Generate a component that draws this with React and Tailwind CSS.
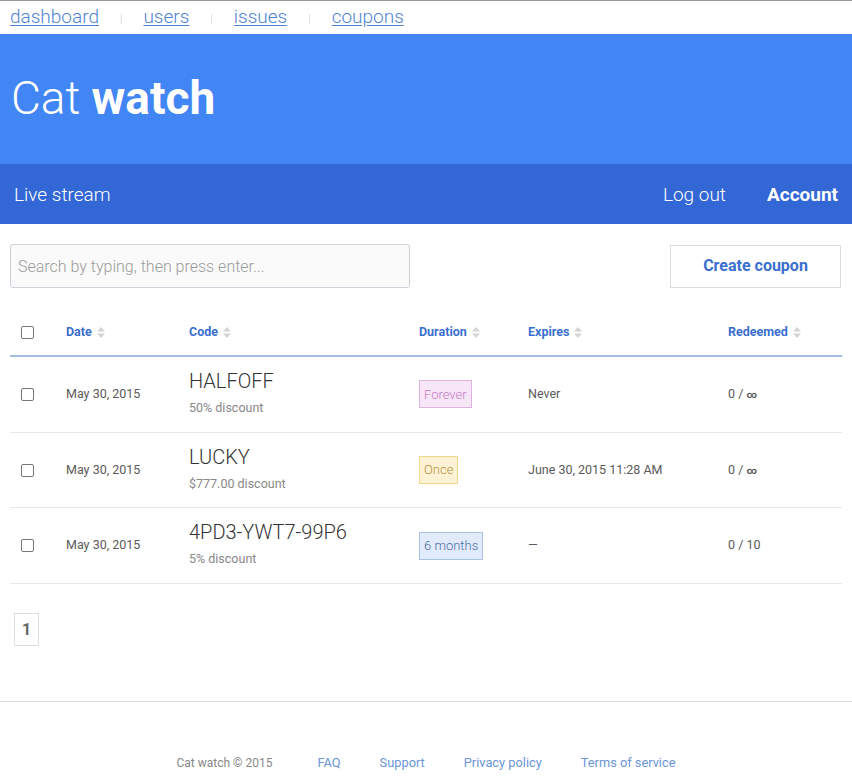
import { useState } from 'react'

const coupons = [
  {
    id: 1,
    date: 'May 30, 2015',
    code: 'HALFOFF',
    discount: '50% discount',
    duration: 'Forever',
    badge: 'bg-[#f7e6f7] border-[#dfb3df] text-[#c67ac6]',
    expires: 'Never',
    used: '0',
    limit: '∞',
  },
  {
    id: 2,
    date: 'May 30, 2015',
    code: 'LUCKY',
    discount: '$777.00 discount',
    duration: 'Once',
    badge: 'bg-[#fdf3d4] border-[#f1d98c] text-[#b5903e]',
    expires: 'June 30, 2015 11:28 AM',
    used: '0',
    limit: '∞',
  },
  {
    id: 3,
    date: 'May 30, 2015',
    code: '4PD3-YWT7-99P6',
    discount: '5% discount',
    duration: '6 months',
    badge: 'bg-[#e1ebfb] border-[#a9c1e7] text-[#4c6ea6]',
    expires: '—',
    used: '0',
    limit: '10',
  },
]

const cols = 'grid grid-cols-[56px_123px_230px_109px_200px_1fr] items-center'

function SortIcon() {
  return (
    <svg width="8" height="11" viewBox="0 0 8 11" className="ml-[5px] inline-block">
      <path d="M4 0L8 4.5H0Z" fill="#d4d4d4" />
      <path d="M4 11L8 6.5H0Z" fill="#d4d4d4" />
    </svg>
  )
}

function Checkbox() {
  const [checked, setChecked] = useState(false)
  return (
    <input
      type="checkbox"
      checked={checked}
      onChange={(e) => setChecked(e.target.checked)}
      className="block ml-[11px] w-[13px] h-[13px] appearance-none border border-[#777] rounded-[2px] bg-white"
    />
  )
}

export default function App() {
  return (
    <div className="min-h-[781px] bg-white border-t border-[#999] font-['Roboto',sans-serif] text-[#444]">
      {/* Top links */}
      <div className="h-[33px] flex items-center px-[10px] text-[19px] font-light">
        <a href="#" className="text-[#4f84d2] underline underline-offset-2">dashboard</a>
        <span className="mx-[21px] text-[11px] text-[#ccc] mt-[4px]">|</span>
        <a href="#" className="text-[#4f84d2] underline underline-offset-2">users</a>
        <span className="mx-[21px] text-[11px] text-[#ccc] mt-[4px]">|</span>
        <a href="#" className="text-[#4f84d2] underline underline-offset-2">issues</a>
        <span className="mx-[21px] text-[11px] text-[#ccc] mt-[4px]">|</span>
        <a href="#" className="text-[#4f84d2] underline underline-offset-2">coupons</a>
      </div>

      {/* Header */}
      <div className="h-[130px] bg-[#4285f4] flex items-center px-[11px]">
        <h1 className="text-[46px] text-white font-light leading-none mt-[-2px]">
          Cat <span className="font-bold">watch</span>
        </h1>
      </div>

      {/* Nav */}
      <div className="h-[60px] bg-[#3367d6] flex items-center justify-between pl-[14px] pr-[14px] text-[19px] text-white">
        <span className="font-light mt-[2px]">Live stream</span>
        <div className="flex items-center gap-[41px] mt-[2px]">
          <span className="font-light">Log out</span>
          <span className="font-bold">Account</span>
        </div>
      </div>

      {/* Toolbar */}
      <div className="flex items-center justify-between pl-[10px] pr-[11px] mt-[20px]">
        <input
          type="text"
          placeholder="Search by typing, then press enter..."
          className="w-[400px] h-[44px] border border-[#ccd1d9] rounded-[3px] bg-[#fafafa] px-[7px] text-[16px] font-light placeholder:text-[#9a9a9a] outline-none"
        />
        <button className="w-[171px] h-[43px] border border-[#dddddd] bg-white text-[16px] font-bold text-[#3a6fd0]">
          Create coupon
        </button>
      </div>

      {/* Table */}
      <div className="mx-[10px] mt-[22px]">
        <div className={`${cols} h-[47px] border-b-2 border-[#a5bde0] text-[12.5px] font-bold text-[#3a6fd0]`}>
          <div><Checkbox /></div>
          <div className="flex items-center">Date<SortIcon /></div>
          <div className="flex items-center">Code<SortIcon /></div>
          <div className="flex items-center">Duration<SortIcon /></div>
          <div className="flex items-center">Expires<SortIcon /></div>
          <div className="flex items-center">Redeemed<SortIcon /></div>
        </div>
        {coupons.map((c) => (
          <div key={c.id} className={`${cols} h-[75.7px] border-b border-[#e6e6e6] text-[12.5px] text-[#5a5a5a]`}>
            <div><Checkbox /></div>
            <div>{c.date}</div>
            <div className="flex flex-col pb-[4px]">
              <span className="text-[20px] font-light text-[#333] leading-[24px]">{c.code}</span>
              <span className="text-[12.5px] text-[#888] mt-[7px] leading-[16px]">{c.discount}</span>
            </div>
            <div>
              <span className={`inline-flex items-center h-[28px] border px-[4px] text-[13px] font-light ${c.badge}`}>{c.duration}</span>
            </div>
            <div>{c.expires}</div>
            <div>
              {c.used} / {c.limit === '∞' ? <span className="font-bold text-[10px]">∞</span> : c.limit}
            </div>
          </div>
        ))}
      </div>

      {/* Pagination */}
      <div className="px-[14px] mt-[29px]">
        <span className="inline-flex items-center justify-center w-[25px] h-[33px] border border-[#dddddd] text-[16px] font-bold text-[#666]">
          1
        </span>
      </div>

      {/* Footer */}
      <div className="mt-[55px] border-t border-[#dddddd] pt-[51px] pb-[12px] flex justify-center items-baseline gap-[39px] text-[12.8px]">
        <span className="text-[#888] text-[12px] mr-[6px]">Cat watch © 2015</span>
        <a href="#" className="text-[#6a95d8]">FAQ</a>
        <a href="#" className="text-[#6a95d8]">Support</a>
        <a href="#" className="text-[#6a95d8]">Privacy policy</a>
        <a href="#" className="text-[#6a95d8]">Terms of service</a>
      </div>
    </div>
  )
}
